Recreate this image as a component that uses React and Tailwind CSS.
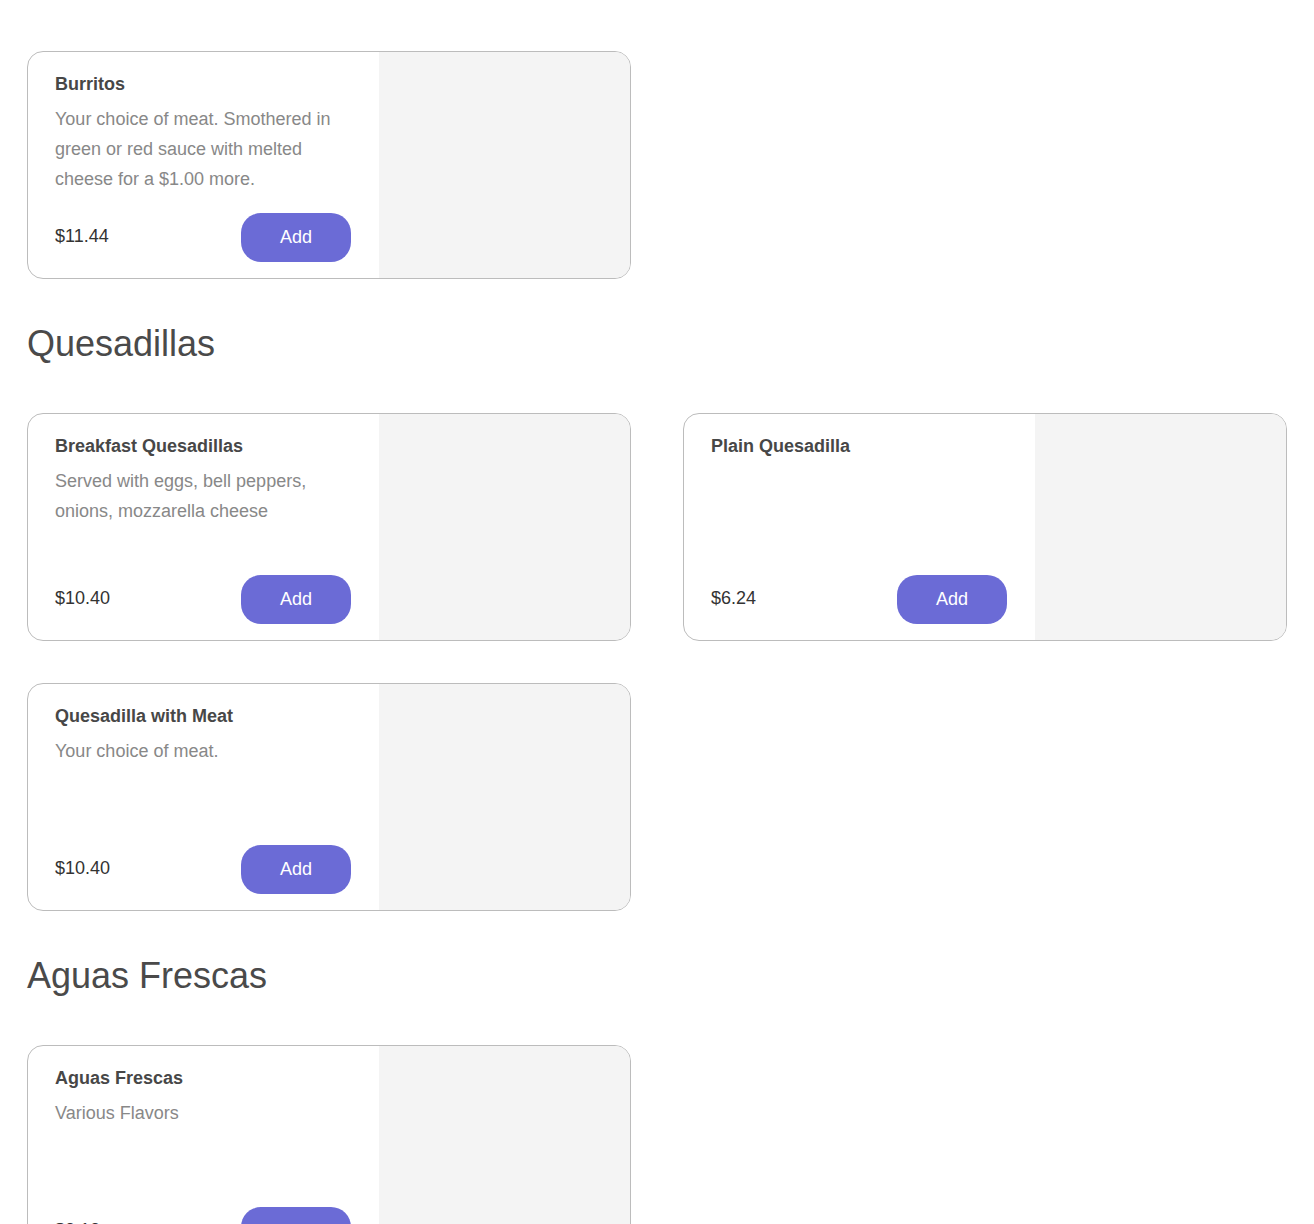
import React from "react";

const sections = [
  {
    title: null,
    items: [
      {
        name: "Burritos",
        desc: "Your choice of meat. Smothered in green or red sauce with melted cheese for a $1.00 more.",
        price: "$11.44",
      },
    ],
  },
  {
    title: "Quesadillas",
    items: [
      {
        name: "Breakfast Quesadillas",
        desc: "Served with eggs, bell peppers, onions, mozzarella cheese",
        price: "$10.40",
      },
      { name: "Plain Quesadilla", desc: "", price: "$6.24" },
      { name: "Quesadilla with Meat", desc: "Your choice of meat.", price: "$10.40" },
    ],
  },
  {
    title: "Aguas Frescas",
    items: [{ name: "Aguas Frescas", desc: "Various Flavors", price: "$3.12" }],
  },
];

function Card({ item }) {
  return (
    <div className="flex h-[228px] overflow-hidden rounded-[16px] border border-[#bcbcbc] bg-white">
      <div className="flex w-[351px] shrink-0 flex-col pl-[27px] pr-[28px] pt-[19px] pb-[16px]">
        <div className="text-[18px] font-bold leading-[27px] text-[#474747]">{item.name}</div>
        {item.desc ? (
          <div className="mt-[6px] text-[18px] leading-[30px] text-[#888888]">{item.desc}</div>
        ) : null}
        <div className="flex-1" />
        <div className="flex items-center justify-between">
          <div className="-mt-[3px] text-[18px] leading-[27px] text-[#333333]">{item.price}</div>
          <button className="h-[49px] w-[110px] rounded-[20px] bg-[#6b6bd6] text-[18px] leading-[27px] text-white">
            Add
          </button>
        </div>
      </div>
      <div className="flex-1 bg-[#f4f4f4]" />
    </div>
  );
}

export default function App() {
  return (
    <div
      className="min-h-screen bg-white px-[27px] pt-[51px]"
      style={{ fontFamily: '"Liberation Sans", Arial, Helvetica, sans-serif' }}
    >
      {sections.map((s, i) => (
        <div key={i}>
          {s.title ? (
            <h2 className="mt-[43px] mb-[48px] text-[36px] leading-[43px] text-[#4a4a4a]">{s.title}</h2>
          ) : null}
          <div className="grid grid-cols-2 gap-x-[52px] gap-y-[42px]">
            {s.items.map((it) => (
              <Card key={it.name} item={it} />
            ))}
          </div>
        </div>
      ))}
    </div>
  );
}
